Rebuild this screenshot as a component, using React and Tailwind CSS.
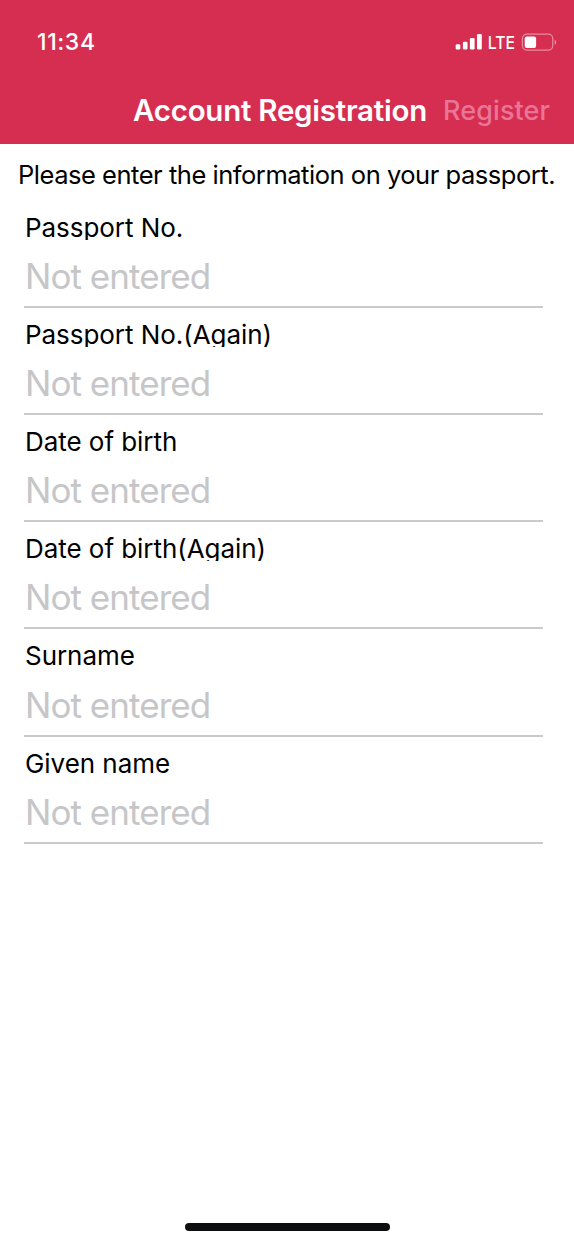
const FIELDS = [
  'Passport No.',
  'Passport No.(Again)',
  'Date of birth',
  'Date of birth(Again)',
  'Surname',
  'Given name',
]

function StatusIcons() {
  return (
    <svg className="h-5 w-[102px]" viewBox="0 0 102 20" fill="white">
      <rect x="0.7" y="12.3" width="4.6" height="5.2" rx="1.2" />
      <rect x="7.9" y="9.8" width="4.6" height="7.7" rx="1.2" />
      <rect x="14.9" y="6" width="4.7" height="11.5" rx="1.2" />
      <rect x="22" y="2" width="4.8" height="15.5" rx="1.2" />
      <text x="32.7" y="17" fontSize="17.5" fontWeight="500" fontFamily="Inter, sans-serif" textLength="27.3" lengthAdjust="spacingAndGlyphs">LTE</text>
      <rect x="67.4" y="2.2" width="30.4" height="15.9" rx="4.5" fill="none" stroke="white" strokeOpacity="0.45" strokeWidth="1.2" />
      <rect x="69.7" y="4.5" width="11.4" height="11.4" rx="2" />
      <path d="M99.7 7.8v5c2-.8 2-4.2 0-5z" fillOpacity="0.5" />
    </svg>
  )
}

function Field({ label }) {
  return (
    <div className="h-[107.2px] pr-[31px] pl-6">
      <div className="h-[27.3px] overflow-hidden pl-px text-[26px] leading-[30px] tracking-[-0.05px] text-black">{label}</div>
      <div className="mt-[15px] h-[51px] pl-px text-[35px] leading-[42px] tracking-[-0.95px] text-[#c6c6c8]">Not entered</div>
      <div className="h-[2px] bg-[#cacaca]" />
    </div>
  )
}

function App() {
  return (
    <div className="flex h-[1243px] w-[574px] flex-col overflow-hidden bg-white font-['Inter',sans-serif] whitespace-nowrap">
      <header className="h-36 bg-[#d62e51] text-white">
        <div className="flex h-[84px] items-center justify-between pr-[17px] pl-[37px]">
          <span className="text-[23px] font-medium tracking-[0.6px]">11:34</span>
          <StatusIcons />
        </div>
        <div className="flex h-[53px] items-center pl-[133px]">
          <h1 className="w-[310px] text-[29.5px] font-semibold tracking-[-0.25px]">Account Registration</h1>
          <button className="pt-0.5 text-[27px] font-medium tracking-[0.1px] text-[#ea7599]">Register</button>
        </div>
      </header>
      <main className="flex-1">
        <p className="pt-[15px] pl-[18px] text-[25.5px] leading-8 tracking-[-0.47px]">Please enter the information on your passport.</p>
        <div className="pt-[21.6px]">
          {FIELDS.map((label) => <Field key={label} label={label} />)}
        </div>
      </main>
      <div className="mx-auto mb-3 h-2 w-[205px] rounded-full bg-[#0d0e10]" />
    </div>
  )
}

export default App
